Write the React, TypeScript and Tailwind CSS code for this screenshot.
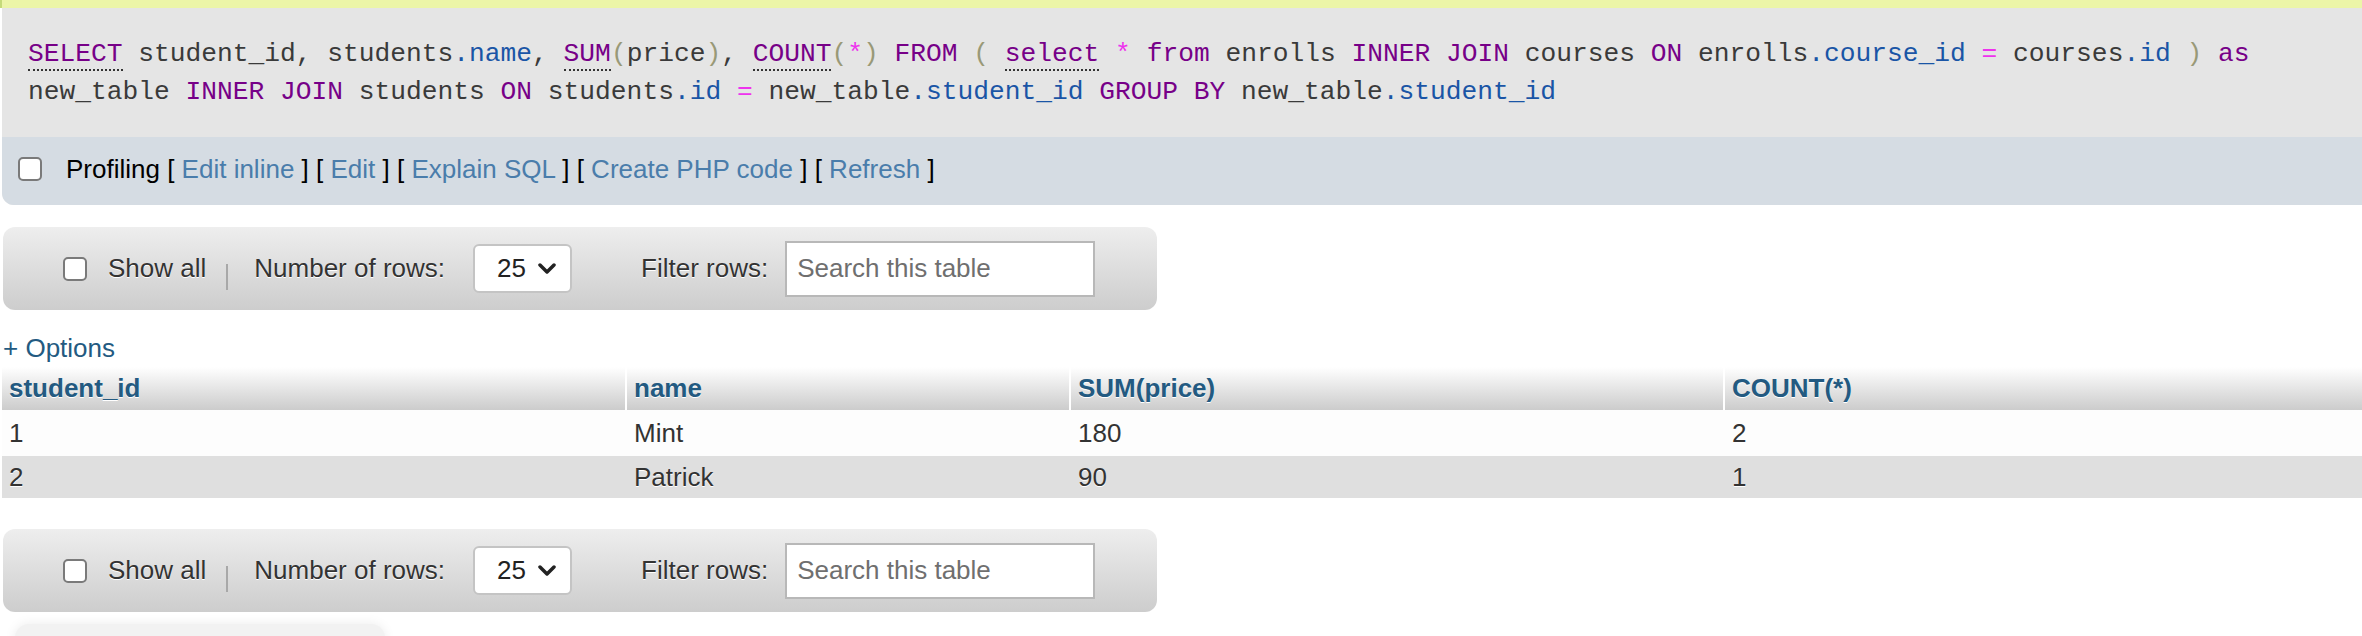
import { ReactNode } from 'react'

type Tok = { t: string; c?: 'k' | 'p' | 'b' | 'o'; u?: boolean }

const line1: Tok[] = [
    { t: 'SELECT', c: 'k', u: true },
    { t: ' student_id, students' },
    { t: '.name', c: 'p' },
    { t: ', ' },
    { t: 'SUM', c: 'k', u: true },
    { t: '(', c: 'b' },
    { t: 'price' },
    { t: ')', c: 'b' },
    { t: ', ' },
    { t: 'COUNT', c: 'k', u: true },
    { t: '(', c: 'b' },
    { t: '*', c: 'o' },
    { t: ')', c: 'b' },
    { t: ' ' },
    { t: 'FROM', c: 'k' },
    { t: ' ' },
    { t: '(', c: 'b' },
    { t: ' ' },
    { t: 'select', c: 'k', u: true },
    { t: ' ' },
    { t: '*', c: 'o' },
    { t: ' ' },
    { t: 'from', c: 'k' },
    { t: ' enrolls ' },
    { t: 'INNER JOIN', c: 'k' },
    { t: ' courses ' },
    { t: 'ON', c: 'k' },
    { t: ' enrolls' },
    { t: '.course_id', c: 'p' },
    { t: ' ' },
    { t: '=', c: 'o' },
    { t: ' courses' },
    { t: '.id', c: 'p' },
    { t: ' ' },
    { t: ')', c: 'b' },
    { t: ' ' },
    { t: 'as', c: 'k' },
]

const line2: Tok[] = [
    { t: 'new_table ' },
    { t: 'INNER JOIN', c: 'k' },
    { t: ' students ' },
    { t: 'ON', c: 'k' },
    { t: ' students' },
    { t: '.id', c: 'p' },
    { t: ' ' },
    { t: '=', c: 'o' },
    { t: ' new_table' },
    { t: '.student_id', c: 'p' },
    { t: ' ' },
    { t: 'GROUP BY', c: 'k' },
    { t: ' new_table' },
    { t: '.student_id', c: 'p' },
]

const tokColor = {
    k: 'text-[#770088]',
    p: 'text-[#1a55a6]',
    b: 'text-[#999977]',
    o: 'text-[#ee33ee]',
}

function SqlLine({ toks }: { toks: Tok[] }) {
    return (
        <div className="whitespace-pre">
            {toks.map((tok, i) => (
                <span
                    key={i}
                    className={`${tok.c ? tokColor[tok.c] : 'text-[#3a3a3a]'} ${
                        tok.u ? 'border-b-2 border-dotted border-[#333]' : ''
                    }`}
                >
                    {tok.t}
                </span>
            ))}
        </div>
    )
}

function Checkbox() {
    return (
        <div className="h-[24px] w-[24px] shrink-0 rounded-[5px] border-2 border-[#7a7a7a] bg-white" />
    )
}

function Link({ children }: { children: ReactNode }) {
    return <span className="text-[#4a7dab]">{children}</span>
}

function NavBar() {
    return (
        <div className="ml-[3px] flex h-[83px] w-[1154px] items-center rounded-[12px] bg-linear-to-b from-[#eeeeee] to-[#cdcdcd] pl-[60px] text-[26px] text-[#333] [text-shadow:0_1px_0_#fff]">
            <Checkbox />
            <span className="ml-[21px]">Show all</span>
            <span className="ml-[20px] mt-[16px] h-[26px] w-[2px] bg-[#a8a8a8]" />
            <span className="ml-[26px]">Number of rows:</span>
            <div className="ml-[28px] flex h-[49px] w-[99px] items-center justify-between rounded-[6px] border-2 border-[#c4c4c4] bg-white pl-[22px] pr-[14px] [text-shadow:none]">
                <span className="text-[#222]">25</span>
                <svg width="18" height="12" viewBox="0 0 18 12">
                    <polyline
                        points="2,2 9,9 16,2"
                        fill="none"
                        stroke="#222"
                        strokeWidth="3.5"
                        strokeLinecap="round"
                        strokeLinejoin="round"
                    />
                </svg>
            </div>
            <span className="ml-[69px]">Filter rows:</span>
            <div className="ml-[17px] flex h-[56px] w-[310px] items-center border-2 border-[#b8b8b8] bg-white pl-[10px] text-[#6f6f6f] [text-shadow:none]">
                Search this table
            </div>
        </div>
    )
}

const cols = ['student_id', 'name', 'SUM(price)', 'COUNT(*)']
const rows = [
    ['1', 'Mint', '180', '2'],
    ['2', 'Patrick', '90', '1'],
]
const widths = ['w-[625px]', 'w-[444px]', 'w-[654px]', 'w-[579px]']

export default function App() {
    return (
        <div className="min-h-[636px] w-[2362px] overflow-hidden bg-white font-['Liberation_Sans',Arial,sans-serif]">
            <div className="h-[8px] border-l-2 border-[#c5da7a] bg-[#ecf5a8]" />
            <div className="ml-[2px] rounded-bl-[12px] bg-[#e5e5e5]">
                <div className="pb-[26px] pl-[26px] pt-[27px] font-['Liberation_Mono',monospace] text-[26.25px] leading-[38px]">
                    <SqlLine toks={line1} />
                    <SqlLine toks={line2} />
                </div>
                <div className="flex h-[68px] items-center rounded-bl-[12px] bg-[#d5dce3] pb-[4px] pl-[16px] text-[26px] text-black">
                    <Checkbox />
                    <span className="ml-[24px] whitespace-pre">
                        Profiling [ <Link>Edit inline</Link> ] [ <Link>Edit</Link> ] [{' '}
                        <Link>Explain SQL</Link> ] [ <Link>Create PHP code</Link> ] [{' '}
                        <Link>Refresh</Link> ]
                    </span>
                </div>
            </div>

            <div className="mt-[22px]">
                <NavBar />
            </div>

            <div className="ml-[3px] mt-[23px] text-[26px] leading-[30px] text-[#235a81]">
                + Options
            </div>

            <div className="ml-[2px] mt-[4px] text-[26px]">
                <div className="flex h-[43px] bg-linear-to-b from-white to-[#cccccc]">
                    {cols.map((c, i) => (
                        <div
                            key={c}
                            className={`${widths[i]} flex items-center pl-[7px] font-bold text-[#235a81] [text-shadow:0_1px_0_#fff] ${
                                i < 3 ? 'border-r-2 border-white' : ''
                            }`}
                        >
                            {c}
                        </div>
                    ))}
                </div>
                {rows.map((r, ri) => (
                    <div
                        key={ri}
                        className={`flex ${ri === 0 ? 'h-[46px] bg-[#fdfdfd]' : 'h-[42px] bg-[#dfdfdf]'}`}
                    >
                        {r.map((v, i) => (
                            <div
                                key={i}
                                className={`${widths[i]} flex items-center pl-[7px] text-[#333] [text-shadow:0_1px_0_#fff]`}
                            >
                                {v}
                            </div>
                        ))}
                    </div>
                ))}
            </div>

            <div className="mt-[31px]">
                <NavBar />
            </div>

            <div className="ml-[15px] mt-[12px] h-[30px] w-[370px] rounded-[14px] bg-[#f2f2f2] shadow-[0_0_12px_rgba(0,0,0,0.08)]" />
        </div>
    )
}
